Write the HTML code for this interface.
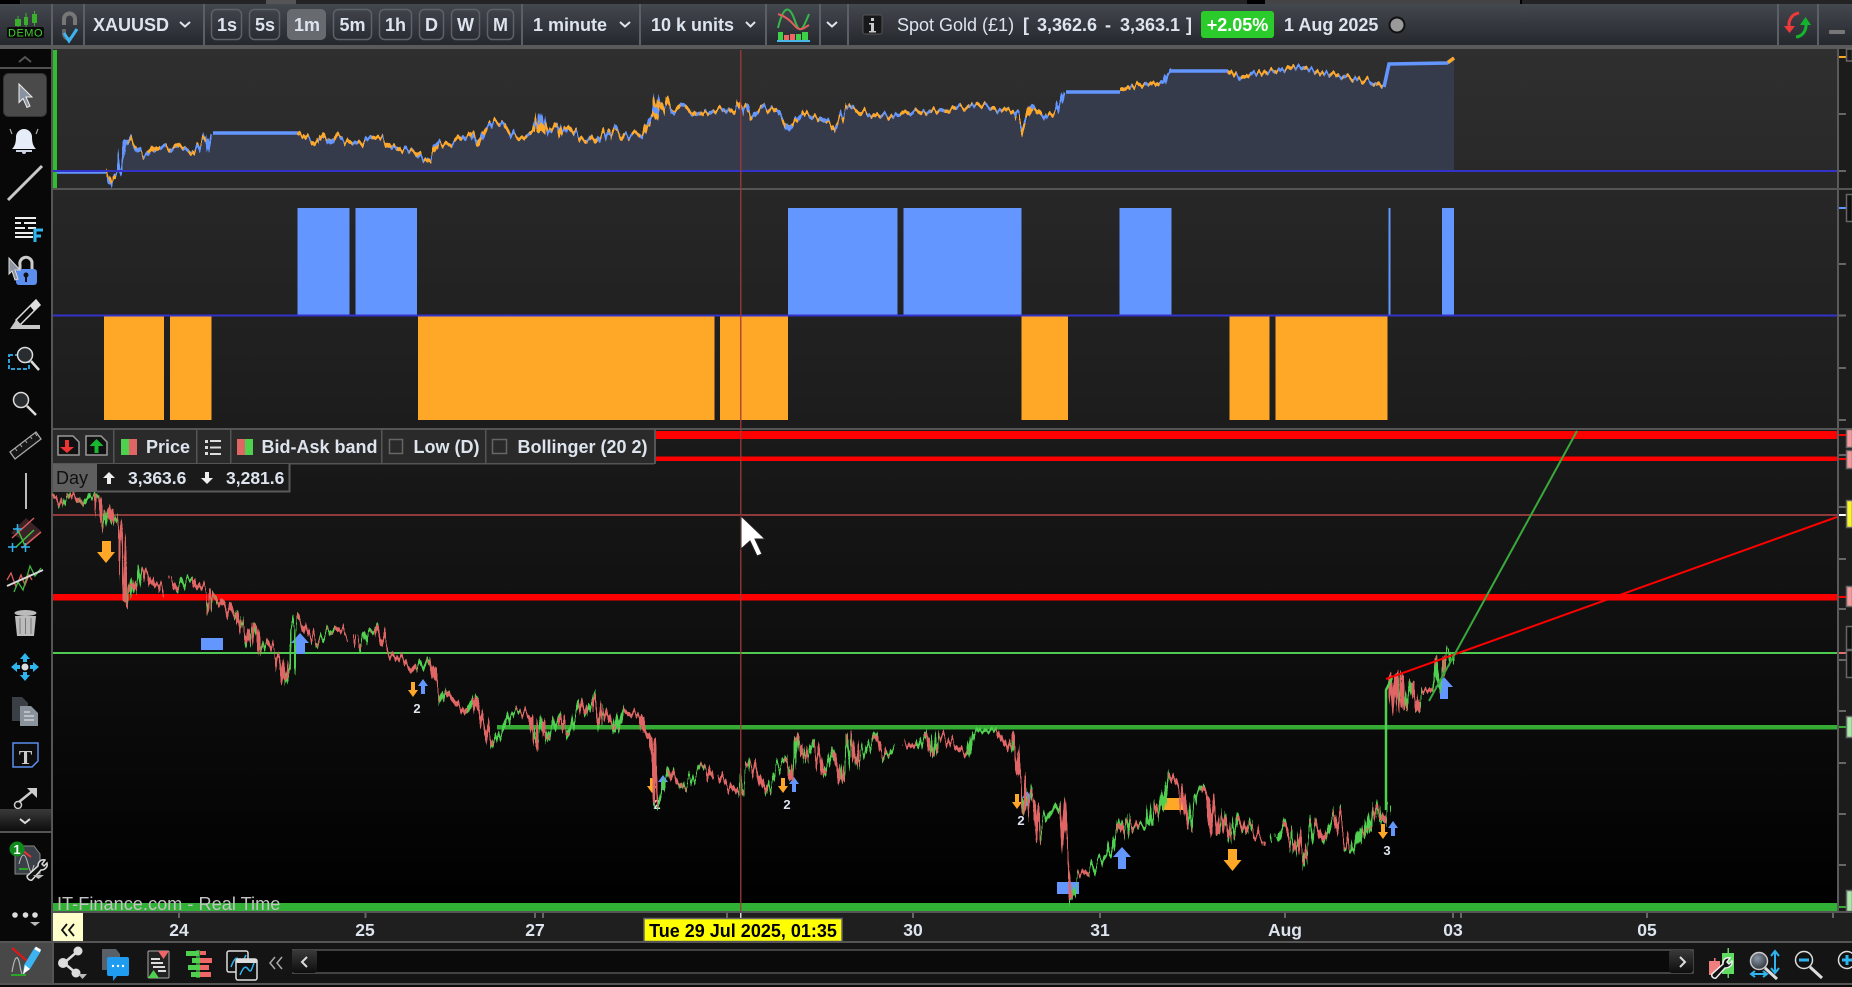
<!DOCTYPE html>
<html lang="en"><head><meta charset="utf-8"><title>XAUUSD chart</title>
<style>
html,body{margin:0;padding:0;background:#000;width:1852px;height:987px;overflow:hidden}
svg{display:block}
text{font-family:"Liberation Sans",sans-serif;font-weight:700;font-size:18px;fill:#dde4ee}
.r{font-weight:400}
</style></head><body>
<svg width="1852" height="987" viewBox="0 0 1852 987" xmlns="http://www.w3.org/2000/svg">
<defs>
<linearGradient id="tb" x1="0" y1="0" x2="0" y2="1"><stop offset="0" stop-color="#44484f"/><stop offset="1" stop-color="#25282d"/></linearGradient>
<linearGradient id="p1" x1="0" y1="0" x2="0" y2="1"><stop offset="0" stop-color="#2f2f2f"/><stop offset="1" stop-color="#282828"/></linearGradient>
<linearGradient id="p2" x1="0" y1="0" x2="0" y2="1"><stop offset="0" stop-color="#272727"/><stop offset="1" stop-color="#1c1c1c"/></linearGradient>
<linearGradient id="p3" x1="0" y1="0" x2="0" y2="1"><stop offset="0" stop-color="#1a1a1a"/><stop offset="1" stop-color="#000"/></linearGradient>
<linearGradient id="bar" x1="0" y1="0" x2="0" y2="1"><stop offset="0" stop-color="#3a3a3a"/><stop offset="1" stop-color="#0d0d0d"/></linearGradient>
<radialGradient id="gl" cx=".4" cy=".35" r=".7"><stop offset="0" stop-color="#8b98a8"/><stop offset="1" stop-color="#2c3138"/></radialGradient>
<filter id="jag" filterUnits="userSpaceOnUse" x="0" y="470" width="1852" height="460" color-interpolation-filters="sRGB">
<feTurbulence type="fractalNoise" baseFrequency="0.33 0.004" numOctaves="1" seed="7" result="n"/>
<feDisplacementMap in="SourceGraphic" in2="n" scale="22" xChannelSelector="B" yChannelSelector="R"/>
</filter>
<filter id="jag2" filterUnits="userSpaceOnUse" x="0" y="50" width="1852" height="140" color-interpolation-filters="sRGB">
<feTurbulence type="fractalNoise" baseFrequency="0.3 0.004" numOctaves="1" seed="4" result="n"/>
<feDisplacementMap in="SourceGraphic" in2="n" scale="14" xChannelSelector="B" yChannelSelector="R"/>
</filter>
</defs>
<rect width="1852" height="987" fill="#000"/>
<!-- top strip -->
<rect x="0" y="0" width="1852" height="5" fill="#242424"/>
<rect x="0" y="0" width="20" height="4" fill="#000"/>
<rect x="266" y="0" width="30" height="4" fill="#555"/>
<rect x="1247" y="0" width="18" height="4" fill="#000"/>
<rect x="1265" y="0" width="255" height="4" fill="#444"/>
<rect x="1520" y="0" width="2" height="4" fill="#000"/>
<!-- toolbar -->
<rect x="0" y="4" width="1852" height="41" fill="url(#tb)"/>
<rect x="0" y="45" width="1852" height="4" fill="#5a5a5a"/>
<g fill="#5c6066"><rect x="51" y="4" width="2" height="41"/><rect x="83" y="4" width="2" height="41"/><rect x="203" y="4" width="2" height="41"/><rect x="521" y="4" width="2" height="41"/><rect x="639" y="4" width="2" height="41"/><rect x="765" y="4" width="2" height="41"/><rect x="819" y="4" width="2" height="41"/><rect x="847" y="4" width="2" height="41"/><rect x="1777" y="4" width="2" height="41"/><rect x="1817" y="4" width="2" height="41"/></g>
<!-- demo logo -->
<rect x="7" y="27" width="37" height="11" rx="2" fill="#0a0a0a"/>
<text x="25.500" y="36.500" text-anchor="middle" style="font-size:11px;font-weight:400;fill:#43d02f;letter-spacing:.5px">DEMO</text>
<g fill="#3cae2e"><rect x="15" y="19" width="6" height="7"/><rect x="24" y="17" width="4" height="8"/><rect x="32" y="14" width="5" height="9"/><rect x="17.500" y="16" width="1" height="11"/><rect x="25.500" y="13" width="1" height="14"/><rect x="34" y="11" width="1" height="15"/></g>
<!-- connection -->
<path d="M64 25V19a5.500 5.500 0 0 1 11 0v6" fill="none" stroke="#777" stroke-width="4"/>
<path d="M64 29v5a5.500 5.500 0 0 0 6 5" fill="none" stroke="#666" stroke-width="4"/>
<path d="M64 33l5 8 8-12" fill="none" stroke="#3cb4f0" stroke-width="3"/>
<text x="93" y="31">XAUUSD</text>
<path d="M180 22l5 4.500 5-4.500" fill="none" stroke="#dde4ee" stroke-width="2"/>
<!-- timeframe buttons -->
<g fill="none" stroke="#5d6268" stroke-width="1.500">
<rect x="211.500" y="9.500" width="30" height="30" rx="5"/><rect x="249.500" y="9.500" width="30" height="30" rx="5"/><rect x="333.500" y="9.500" width="38" height="30" rx="5"/><rect x="379.500" y="9.500" width="32" height="30" rx="5"/><rect x="419.500" y="9.500" width="24" height="30" rx="5"/><rect x="451.500" y="9.500" width="28" height="30" rx="5"/><rect x="487.500" y="9.500" width="26" height="30" rx="5"/></g>
<rect x="287" y="9" width="39" height="31" rx="5" fill="#676a6e"/>
<g text-anchor="middle"><text x="227" y="31">1s</text><text x="265" y="31">5s</text><text x="307" y="31">1m</text><text x="352.500" y="31">5m</text><text x="395.500" y="31">1h</text><text x="431.500" y="31">D</text><text x="465.500" y="31">W</text><text x="500.500" y="31">M</text></g>
<text x="533" y="31">1 minute</text>
<path d="M620 22l5 4.500 5-4.500" fill="none" stroke="#dde4ee" stroke-width="2"/>
<text x="651" y="31">10 k units</text>
<path d="M746 22l4.500 4.500 4.500-4.500" fill="none" stroke="#dde4ee" stroke-width="2"/>
<!-- indicator icon -->
<path d="M778 28c6-25 12-22 17-7s8 8 14-7" fill="none" stroke="#35b84a" stroke-width="2"/>
<path d="M778 14c7 2 12 6 17 12s9 2 14-1" fill="none" stroke="#e25c5c" stroke-width="2"/>
<g><rect x="778" y="32" width="5" height="8" fill="#3fd04a"/><rect x="784" y="35" width="5" height="5" fill="#e66"/><rect x="790" y="34" width="5" height="6" fill="#e66"/><rect x="796" y="34" width="5" height="6" fill="#3fd04a"/><rect x="802" y="32" width="6" height="8" fill="#3fd04a"/><rect x="777" y="40" width="33" height="2" fill="#49b8e8"/></g>
<path d="M827 22l5 4.500 5-4.500" fill="none" stroke="#dde4ee" stroke-width="2"/>
<!-- info -->
<rect x="863" y="15" width="19" height="19" rx="2" fill="#17181a" stroke="#555"/>
<rect x="871" y="18" width="3" height="3" fill="#ccc"/><path d="M869 23h5v8h2v1.500h-7V31h2v-6.500h-2z" fill="#ccc"/>
<text x="897" y="31" class="r">Spot Gold (£1)</text>
<text x="1023" y="31">[</text><text x="1037" y="31">3,362.6</text><text x="1105" y="31">-</text><text x="1120" y="31">3,363.1</text><text x="1186" y="31">]</text>
<rect x="1201" y="11" width="73" height="27" rx="3" fill="#2ccb2c"/>
<text x="1237.500" y="31" text-anchor="middle" style="fill:#fff">+2.05%</text>
<text x="1284" y="31">1 Aug 2025</text>
<circle cx="1397" cy="25" r="7.500" fill="#9a9a9a" stroke="#111" stroke-width="2"/>
<!-- refresh icon -->
<path d="M1799 13c-8 1-12 9-9 17" fill="none" stroke="#ee3a3a" stroke-width="3"/><path d="M1784 26h11l-5.500 7z" fill="#ee3a3a"/>
<path d="M1796 37c8-1 12-9 9-17" fill="none" stroke="#12b52c" stroke-width="3"/><path d="M1811 25h-11l5.500-8z" fill="#12b52c"/>
<rect x="1829" y="30" width="16" height="4" rx="1" fill="#777"/>

<!-- left sidebar -->
<rect x="0" y="49" width="51" height="938" fill="#080808"/>
<rect x="51" y="49" width="2" height="894" fill="#555"/>
<path d="M19 62l6-5 6 5" fill="none" stroke="#555" stroke-width="2"/>
<rect x="0" y="67" width="51" height="2" fill="#505050"/>
<rect x="3.500" y="73.500" width="43" height="43" rx="5" fill="#4a4a4a" stroke="#333"/>
<path d="M19 84l13 13h-6l4 9-3 1.500-4-9-4 4z" fill="#89929f" stroke="#eee" stroke-width="1"/>
<!-- bell -->
<path d="M24 129a8 8 0 0 1 8 8c0 7 2 10 4 12H12c2-2 4-5 4-12a8 8 0 0 1 8-8z" fill="#e6edf8"/>
<rect x="16" y="150" width="16" height="2" fill="#cfd7e4"/><circle cx="24" cy="152" r="2" fill="#cfd7e4"/>
<path d="M10 129l2 5M38 129l-2 5" stroke="#aaa" stroke-width="1.200"/>
<!-- line -->
<path d="M8 200L42 166" stroke="#c9c9c9" stroke-width="3"/>
<!-- data F -->
<g fill="#eee"><rect x="15" y="217" width="21" height="2"/><rect x="15" y="222" width="6" height="2"/><rect x="24" y="222" width="12" height="2"/><rect x="15" y="227" width="10" height="2"/><rect x="28" y="227" width="8" height="2"/><rect x="15" y="232" width="18" height="2"/><rect x="15" y="236" width="18" height="2"/></g>
<path d="M35 242v-12h8M35 236h6" fill="none" stroke="#2fb4ee" stroke-width="3"/>
<!-- lock -->
<path d="M20 274v-9a6 6 0 0 1 12-3v8" fill="none" stroke="#ccc" stroke-width="3"/>
<rect x="16" y="269" width="21" height="16" rx="3" fill="#5c8ef0"/><circle cx="26" cy="275" r="2.500" fill="#111"/><rect x="25" y="276" width="2" height="6" fill="#111"/>
<path d="M9 258l11 12h-5l3 9-3 1-3-9-3 3z" fill="#8b94a0" stroke="#ddd"/>
<!-- eraser -->
<path d="M16 320l20-20 4 5-20 20z" fill="none" stroke="#ddd" stroke-width="1.500"/><path d="M30 306l6-6 4 5-6 6z" fill="#ddd"/>
<path d="M10 329l6-9 6 5h18v4z" fill="#c8c8c8"/>
<!-- zoom box -->
<rect x="9" y="355" width="20" height="14" fill="none" stroke="#2fb4ee" stroke-width="1.800" stroke-dasharray="4 2"/>
<circle cx="25" cy="355" r="7.500" fill="#2a2d30" stroke="#ddd" stroke-width="1.500"/>
<path d="M31 361l8 9" stroke="#ddd" stroke-width="2.500"/>
<!-- magnifier -->
<circle cx="21" cy="400" r="7.500" fill="#2a2d30" stroke="#ddd" stroke-width="1.500"/>
<path d="M27 406l9 9" stroke="#ddd" stroke-width="2.500"/>
<!-- ruler -->
<path d="M10 452l26-20 5 7-26 20z" fill="#161616" stroke="#aaa" stroke-width="1.300"/>
<path d="M15 448l2 3M20 444l2 3M25 440l2 3M30 436l2 3M35 433l2 3" stroke="#aaa"/>
<rect x="25" y="473" width="2" height="36" fill="#bbb"/>
<!-- fib -->
<path d="M26 518l15 13-13 13-17-11z" fill="#3a2327"/>
<path d="M12 538L34 518M22 548L41 532" stroke="#d95c5c" stroke-width="1.500"/>
<path d="M17 528l9 20M16 547l18-17" stroke="#3fc23f" stroke-width="1.500"/>
<g stroke="#2fb4ee" stroke-width="1.500"><path d="M13 529h9M17.500 524v9M8 547h9M12.500 543v9M21 547h9M25.500 543v9"/></g>
<!-- waves -->
<path d="M7 580l4-7 5 14 5-12 4 10 4-10 3 5" fill="none" stroke="#d95c5c" stroke-width="1.300"/>
<path d="M14 592l4-10 5 8 7-24 5 10 6-8" fill="none" stroke="#3fb73f" stroke-width="1.300"/>
<path d="M7 586L43 570" stroke="#d8d8d8" stroke-width="2"/>
<!-- trash -->
<ellipse cx="25.500" cy="613" rx="11" ry="3" fill="#bbb"/><path d="M15 616h21l-2 20H17z" fill="#bcbcbc"/><path d="M20 618v16M25.500 618v16M31 618v16" stroke="#777"/>
<!-- move -->
<circle cx="25" cy="667" r="3.500" fill="#ddd"/>
<g fill="#2fb4ee"><path d="M25 653l5 6h-3v3h-4v-3h-3z"/><path d="M25 681l5-6h-3v-3h-4v3h-3z"/><path d="M11 667l6-5v3h3v4h-3v3z"/><path d="M39 667l-6-5v3h-3v4h3v3z"/></g>
<!-- docs -->
<path d="M12 697h10l6 6v18H12z" fill="#3a3f46"/><path d="M20 706h11l7 7v13H20z" fill="#8a939b"/><path d="M24 716h10M24 720h10M24 712h6" stroke="#eee"/>
<!-- T -->
<path d="M13 743h25v18l-6 6H13z" fill="#0d0d0d" stroke="#5c8ef0" stroke-width="1.500"/>
<text x="25.500" y="764" text-anchor="middle" style="font-family:'Liberation Serif',serif;font-size:20px;fill:#ccc">T</text>
<!-- arrow -->
<path d="M19 802L35 789" stroke="#ccc" stroke-width="2.500"/><path d="M27 788h10v10z" fill="#ccc"/><circle cx="18" cy="805" r="3.500" fill="none" stroke="#ccc" stroke-width="1.500"/>
<rect x="0" y="809" width="51" height="22" fill="url(#bar)"/>
<path d="M20 819l5 4 5-4" fill="none" stroke="#ddd" stroke-width="2"/>
<rect x="0" y="831" width="51" height="2" fill="#555"/>
<!-- doc wrench icon -->
<path d="M15 846h19l6 8v20H15z" fill="#3b4048" stroke="#888"/><path d="M19 864c3-12 6-12 9 0s4 8 6 1" fill="none" stroke="#bbb"/><path d="M23 851l8 6" stroke="#e33" stroke-width="2"/><rect x="19" y="868" width="9" height="2" fill="#2aa52a"/>
<path d="M27 876l11-10c0-5 4-7 7-6l-3 4 2 2 3-3c1 4-2 7-6 7l-9 10c-3 1-5-2-5-4z" fill="#111" stroke="#ddd" stroke-width="1.500"/>
<path d="M33 875h11l-5.500 4z" fill="#bbb"/>
<circle cx="17" cy="849" r="7.500" fill="#0f8a1c"/><text x="17" y="854" text-anchor="middle" style="font-size:13px;fill:#fff">1</text>
<!-- dots -->
<circle cx="15" cy="915" r="2.800" fill="#ddd"/><circle cx="25.500" cy="915" r="2.800" fill="#ddd"/><circle cx="35" cy="915" r="2.800" fill="#ddd"/>
<path d="M30 922h10l-5 4z" fill="#bbb"/>

<!-- panel 1 -->
<rect x="53" y="49" width="1786" height="139" fill="url(#p1)"/>
<rect x="53" y="50" width="4" height="138" fill="#2fbe2f"/>
<rect x="53" y="188" width="1786" height="2" fill="#555"/>
<path d="M121 171L125 145 129.500 140 135 148 144 156 150 154 155 148 165 145 173 150 179.500 145 186 148 194 153 199.500 145 206 138 208.500 147 213 133 298 133 307 138 318 145 323 138 329 144 336 136 347 142 360 144 367 138 380 137 391.500 147 398 152 405 149 416 153 420.500 159 429.500 160 438.400 143 449.600 146 463 137 472 133 478.600 145 485 131 494 121 503 123 514 136 523 137 534 132 536.600 120 541 133 543 120 548 132 557 124 561 135 568 127 581 140 590 137 597 143 606 132 610 138 617 129 624 137 637 132 644 135 650 121 655 118 658 98 664 110 668 102 673 112 682 105 688 107 695 112 704 115 713 111 728 108 735 112 740 103 746 108 749 117 762 106 780 115 789 128 803 112 821 118 833 128 848 106 868 115 898 115 933 110 980 106 1016 112 1023 130 1033 106 1045 116 1057 112 1066 92 1120 91 1140 85 1163 83 1169 71 1228 71 1240 77 1270 71 1299 67 1323 73 1346 77 1376 83 1384 87 1389 64 1447 63 1454 58V171z" fill="#363b4c"/>
<!-- equity flat stretches -->
<path d="M57 172H106M213 133H298M1066 92H1120M1169 71H1228M1384 87L1389 64 1447 63 1454 58" fill="none" stroke="#6496ff" stroke-width="3.500"/>
<path d="M1448 62.500L1454 58" fill="none" stroke="#ffa726" stroke-width="3.500"/>
<!-- equity choppy stretches -->
<g filter="url(#jag2)" fill="none" stroke-width="3.500">
<g stroke="#6496ff">
<path d="M106 172L111 183 115 177 121 172 125 145 129.500 140 135 148 144 156 150 154 155 148 165 145 173 150 179.500 145 186 148 194 153 199.500 145 206 138 208.500 147 213 133"/>
<path id="eqc" d="M298 133L307 138 318 145 323 138 329 144 336 136 347 142 360 144 367 138 380 137 391.500 147 398 152 405 149 416 153 420.500 159 429.500 160 438.400 143 449.600 146 463 137 472 133 478.600 145 485 131 494 121 503 123 514 136 523 137 534 132 536.600 120 541 133 543 120 548 132 557 124 561 135 568 127 581 140 590 137 597 143 606 132 610 138 617 129 624 137 637 132 644 135 650 121 655 118 658 98 664 110 668 102 673 112 682 105 688 107 695 112 704 115 713 111 728 108 735 112 740 103 746 108 749 117 762 106 780 115 789 128 803 112 821 118 833 128 848 106 868 115 898 115 933 110 980 106 1016 112 1023 130 1033 106 1045 116 1057 112 1066 92"/>
<path d="M1120 91L1140 85 1163 83 1169 71"/>
<path d="M1228 71L1240 77 1270 71 1299 67 1323 73 1346 77 1376 83 1384 87"/>
</g>
<g stroke="#ffa726" stroke-dasharray="9 6">
<path d="M106 172L111 183 115 177"/>
<path d="M129.500 140L135 148 144 156 150 154 155 148 165 145 173 150 179.500 145 186 148 194 153 199.500 145 206 138"/>
<path d="M298 133L307 138 318 145 323 138 329 144 336 136 347 142 360 144 367 138 380 137 391.500 147 398 152 405 149 416 153 420.500 159 429.500 160 438.400 143 449.600 146 463 137 472 133 478.600 145 485 131 494 121 503 123 514 136 523 137 534 132 536.600 120 541 133 543 120 548 132 557 124 561 135 568 127 581 140 590 137 597 143 606 132 610 138 617 129 624 137 637 132 644 135 650 121 655 118 658 98 664 110 668 102 673 112 682 105 688 107 695 112 704 115 713 111 728 108 735 112 740 103 746 108 749 117 762 106 780 115 789 128 803 112 821 118 833 128 848 106 868 115 898 115 933 110 980 106 1016 112 1023 130 1033 106 1045 116 1057 112"/>
<path d="M1120 91L1140 85 1163 83"/>
<path d="M1228 71L1240 77 1270 71 1299 67 1323 73 1346 77 1376 83 1384 87"/>
</g></g>
<rect x="53" y="170" width="1786" height="2" fill="#3333cc"/>
<!-- panel 2 -->
<rect x="53" y="190" width="1786" height="238" fill="url(#p2)"/>
<g fill="#6496ff"><rect x="297.500" y="208" width="52" height="107"/><rect x="355.500" y="208" width="61.500" height="107"/><rect x="788" y="208" width="109.500" height="107"/><rect x="903.500" y="208" width="118" height="107"/><rect x="1119.500" y="208" width="52" height="107"/><rect x="1388.500" y="208" width="2" height="107"/><rect x="1442" y="208" width="12" height="107"/></g>
<g fill="#ffa726"><rect x="104" y="316" width="60" height="104"/><rect x="170" y="316" width="41.500" height="104"/><rect x="418" y="316" width="296.500" height="104"/><rect x="720" y="316" width="68" height="104"/><rect x="1021.500" y="316" width="46.500" height="104"/><rect x="1229.500" y="316" width="40" height="104"/><rect x="1275.500" y="316" width="112" height="104"/></g>
<rect x="53" y="314.500" width="1786" height="2" fill="#3333cc"/>
<rect x="53" y="428" width="1786" height="2" fill="#555"/>
<!-- main panel -->
<rect x="53" y="430" width="1784" height="481" fill="url(#p3)"/>
<rect x="53" y="431" width="1784" height="8" fill="#f00"/>
<rect x="53" y="456.500" width="1784" height="4.500" fill="#f00"/>
<rect x="53" y="514" width="1784" height="2" fill="#8f3a3a"/>
<rect x="53" y="594" width="1784" height="6.500" fill="#f00"/>
<rect x="53" y="652" width="1784" height="2" fill="#4fc94f"/>
<rect x="497" y="725" width="1340" height="4.500" fill="#35ab35"/>
<rect x="53" y="903" width="1784" height="8" fill="#30b035"/>
<!-- markers -->
<g fill="#ffa726">
<path d="M102 541h9v11h4l-9 11-9-11h5z"/><path d="M1228 849h9v11h4.500l-9 11-9-11h4.500z"/>
<path d="M411 682h4v8h3l-5 7-5-7h3z"/><path d="M650 778h4v8h3l-5 7-5-7h3z"/><path d="M781 778h4v8h3l-5 7-5-7h3z"/><path d="M1015 794h4v8h3l-5 7-5-7h3z"/><path d="M1381 824h4v8h3l-5 7-5-7h3z"/>
<rect x="1162" y="798" width="21" height="12"/></g>
<g fill="#6496ff">
<rect x="201" y="638" width="22" height="12"/><rect x="1057" y="882" width="22" height="12"/>
<path d="M300 633l9 10h-4v11h-9v-11h-5z"/><path d="M1122 847l9 10h-5v12h-8v-12h-5z"/><path d="M1444 677l9 10h-5v12h-8v-12h-5z"/>
<path d="M423 679l5 7h-3v8h-4v-8h-3z"/><path d="M663 775l5 7h-3v8h-4v-8h-3z"/><path d="M794 777l5 7h-3v8h-4v-8h-3z"/><path d="M1027 791l5 7h-3v8h-4v-8h-3z"/><path d="M1393 821l5 7h-3v8h-4v-8h-3z"/></g>
<g text-anchor="middle"><text x="417" y="713" style="font-size:13px">2</text><text x="657" y="809" style="font-size:13px">2</text><text x="787" y="809" style="font-size:13px">2</text><text x="1021" y="825" style="font-size:13px">2</text><text x="1387" y="855" style="font-size:13px">3</text></g>
<!-- candles -->
<g filter="url(#jag)">
<g fill="none" stroke="#4fd04f" stroke-width="3.500">
<path d="M53 495L62 505 70 495 83 503 90 495 97 495 100 507 103 533 109 508 112 523 117 517 121 530 123 553 125 593 127 605 130 582 135 592 141 568 147 570 153 585 160 587 162 593"/>
<path d="M170 578L177 588 185 577 193 577 198 587 207 593 210 613 215 595 225 605 235 623 240 617 248 643 254 623 260 653 268 643 280 657 285 682 290 670 292 632 298 618 313 637 317 642 323 637 332 627 340 630 347 640"/>
<path d="M355 635L360 645 365 633 377 627 383 642 390 652 403 660 417 672 427 660 435 683 440 700 445 690 457 703 467 713 475 697 483 723 491.500 747 501 733 511 713 519 712 531 717 535 747 543 718 547 740 559 715 567 735 580.500 702 586 713 594 698 600 722 604 708 616 730 622 710 640 717 644 730 652 740 656 803 660 798 669 770 677 783 683 788 701 767 707 768 711 778"/>
<path d="M719 775L727 783 739 795 747 763 754 765 766 790 778 767 786 758 792 780 797 737 806 760 814 742 824 775 833.500 752 842 782 850.500 730 857 765 875 735 885 757 895 747"/>
<path d="M903 743L917 747 926 732 933 757 938 732 956 747 968 755 974 732 996 730 1011.500 750 1013.500 735 1017 763 1023 783 1025 812 1029 793 1035 807 1039 842 1047 820 1061 802 1065 843 1069 887 1070 897 1080 875 1088 878 1100 860 1107 857 1118 825 1123 837 1128 818 1137 828 1148 825 1153 802 1160 817 1169 775 1175 782 1180 788 1188 828 1195 795 1203 787 1210 797 1217 837 1223 817 1230 842 1237 818 1245 832 1250 823 1257 838 1267 840"/>
<path d="M1275 840L1282 825 1292 848 1297 830 1305 860 1315 822 1323 838 1335 813 1348 850 1353 850 1360 825 1368 832 1373 805 1382 823 1387 803"/>
<path d="M1393 675L1397 715 1401 673 1404 708 1410 683 1417 711 1422 690 1433 693 1437 682 1441 657 1443 677 1450 652"/></g>
<path fill="none" stroke="#e06666" stroke-width="4" d="M53 495L62 505M70 495L83 503M97 495L100 507 103 533M109 508L112 523M117 517L121 530 123 553 125 593 127 605M130 582L135 592M141 568L147 570 153 585 160 587 162 593M170 578L177 588M193 577L198 587 207 593 210 613M215 595L225 605 235 623M240 617L248 643M254 623L260 653M268 643L280 657 285 682M298 618L313 637 317 642M332 627L340 630 347 640M355 635L360 645M377 627L383 642 390 652 403 660 417 672M427 660L435 683 440 700M445 690L457 703 467 713M475 697L483 723 491.500 747M519 712L531 717 535 747M543 718L547 740M559 715L567 735M580.500 702L586 713M594 698L600 722M604 708L616 730M622 710L640 717 644 730 652 740 656 803M669 770L677 783 683 788M701 767L707 768 711 778M719 775L727 783 739 795M747 763L754 765 766 790M786 758L792 780M797 737L806 760M814 742L824 775M833.500 752L842 782M850.500 730L857 765M875 735L885 757M903 743L917 747M926 732L933 757M938 732L956 747 968 755M996 730L1011.500 750M1013.500 735L1017 763 1023 783 1025 812M1029 793L1035 807 1039 842M1061 802L1065 843 1069 887 1070 897M1080 875L1088 878M1118 825L1123 837M1128 818L1137 828M1153 802L1160 817M1169 775L1175 782 1180 788 1188 828M1203 787L1210 797 1217 837M1223 817L1230 842M1237 818L1245 832M1250 823L1257 838 1267 840M1282 825L1292 848M1297 830L1305 860M1315 822L1323 838M1335 813L1348 850M1360 825L1368 832M1373 805L1382 823M1393 675L1397 715M1401 673L1404 708M1410 683L1417 711M1422 690L1433 693M1441 657L1443 677"/>
</g>
<!-- big green jump candle -->
<path d="M1386 810V690L1392 678" fill="none" stroke="#4fd04f" stroke-width="2.500"/>
<!-- crosshair above candles -->
<rect x="740" y="50" width="1.500" height="862" fill="#a03a3a" opacity=".85"/>
<!-- trend lines -->
<path d="M1386 679L1837 517" stroke="#f00" stroke-width="2"/>
<path d="M1429 701L1577 431" stroke="#3aa83a" stroke-width="2"/>
<!-- mouse cursor -->
<path d="M741 516l24 23h-10l7 15-5 2-7-15-9 8z" fill="#fff" stroke="#222"/>
<!-- legend -->
<rect x="53" y="430" width="601" height="33" fill="#2a2a2a"/>
<rect x="654" y="430" width="2" height="34" fill="#555"/>
<rect x="53" y="463" width="601" height="1.500" fill="#555"/>
<g fill="#555"><rect x="113" y="430" width="1.500" height="33"/><rect x="196" y="430" width="1.500" height="33"/><rect x="230" y="430" width="1.500" height="33"/><rect x="381" y="430" width="1.500" height="33"/><rect x="485" y="430" width="1.500" height="33"/></g>
<path d="M58 436h15l6 6v13H58z" fill="#111" stroke="#999" stroke-width="1.500"/><path d="M65 440h4v7h5l-7 6-7-6h5z" fill="#ee3333"/>
<path d="M86 436h15l6 6v13H86z" fill="#111" stroke="#999" stroke-width="1.500"/><path d="M96.500 439l7 7h-5v7h-4v-7h-5z" fill="#18b830"/>
<rect x="121" y="439" width="8" height="16" fill="#4fd04f"/><rect x="129" y="439" width="8" height="16" fill="#e06666"/>
<text x="146" y="453">Price</text>
<g fill="#ddd"><rect x="205" y="440" width="3" height="3"/><rect x="210" y="440" width="11" height="2"/><rect x="205" y="446" width="3" height="3"/><rect x="210" y="446.500" width="11" height="2"/><rect x="205" y="452" width="3" height="3"/><rect x="210" y="453" width="11" height="2"/></g>
<rect x="237" y="439" width="8" height="16" fill="#e06666"/><rect x="245" y="439" width="8" height="16" fill="#4fd04f"/>
<text x="261.500" y="453">Bid-Ask band</text>
<rect x="389.500" y="439.500" width="13" height="14" fill="none" stroke="#666" stroke-width="1.500"/>
<text x="413.500" y="453">Low (D)</text>
<rect x="492.500" y="439.500" width="14" height="14" fill="none" stroke="#666" stroke-width="1.500"/>
<text x="517.500" y="453">Bollinger (20 2)</text>
<rect x="53" y="464" width="44" height="28" fill="#5f5f5f"/>
<text x="56" y="484" class="r" style="fill:#111;font-size:18px">Day</text>
<rect x="97" y="464" width="193" height="28" fill="#1a1a1a"/>
<path d="M97 491.500H289.500V464" fill="none" stroke="#5a5a5a" stroke-width="2"/>
<path d="M109 472l6 6h-4v6h-4v-6h-4z" fill="#eee"/>
<path d="M207 484l6-6h-4v-6h-4v6h-4z" fill="#eee"/>
<text x="128" y="484" style="font-size:17.500px">3,363.6</text>
<text x="226" y="484" style="font-size:17.500px">3,281.6</text>
<!-- IT finance -->
<text x="57" y="910" class="r" style="fill:#c4c4c4;font-size:18.200px">IT-Finance.com - Real Time</text>
<!-- right scale -->
<rect x="1839" y="49" width="13" height="864" fill="#1c1c1c"/>
<rect x="1837" y="49" width="2" height="864" fill="#5a5a5a"/>
<rect x="1837" y="188" width="15" height="2" fill="#555"/><rect x="1837" y="428" width="15" height="2" fill="#555"/>
<g fill="#666"><rect x="1839" y="113" width="7" height="2"/><rect x="1839" y="170" width="7" height="2"/><rect x="1839" y="263" width="7" height="2"/><rect x="1839" y="314.500" width="7" height="2"/><rect x="1839" y="367" width="7" height="2"/><rect x="1839" y="419" width="7" height="2"/><rect x="1839" y="454" width="7" height="2"/><rect x="1839" y="506" width="7" height="2"/><rect x="1839" y="558" width="7" height="2"/><rect x="1839" y="608" width="7" height="2"/><rect x="1839" y="659" width="7" height="2"/><rect x="1839" y="710" width="7" height="2"/><rect x="1839" y="762" width="7" height="2"/><rect x="1839" y="813" width="7" height="2"/><rect x="1839" y="864" width="7" height="2"/></g>
<rect x="1839" y="56" width="7" height="2" fill="#ffa726"/><rect x="1839" y="207" width="7" height="2" fill="#6496ff"/>
<rect x="1839" y="434" width="7" height="2" fill="#f00"/><rect x="1839" y="458" width="7" height="2" fill="#f00"/><rect x="1839" y="514" width="7" height="2" fill="#fff"/><rect x="1839" y="596" width="7" height="2" fill="#f00"/><rect x="1839" y="652" width="7" height="2" fill="#e07070"/><rect x="1839" y="726" width="7" height="2" fill="#35ab35"/><rect x="1839" y="906" width="7" height="2" fill="#35ab35"/>
<g stroke="#666" stroke-width="1.500">
<rect x="1846.500" y="49" width="6" height="12" fill="#1a1a1a"/><rect x="1846.500" y="194.500" width="6" height="27" fill="#111"/>
<rect x="1846.500" y="429.500" width="6" height="18" fill="#f59a9a"/><rect x="1846.500" y="450.500" width="6" height="18" fill="#f59a9a"/>
<rect x="1846.500" y="500.500" width="6" height="27" fill="#f6f628"/>
<rect x="1846.500" y="586.500" width="6" height="20" fill="#f59a9a"/>
<rect x="1846.500" y="626.500" width="6" height="23" fill="#111"/><rect x="1846.500" y="650.500" width="6" height="27" fill="#111"/>
<rect x="1846.500" y="716.500" width="6" height="21" fill="#a8e8a8"/><rect x="1846.500" y="890.500" width="6" height="21" fill="#a8e8a8"/></g>
<!-- time axis -->
<rect x="53" y="911" width="1799" height="2" fill="#555"/>
<rect x="53" y="913" width="1799" height="28" fill="#1f1f1f"/>
<rect x="53" y="913" width="30" height="28" fill="#ffffcc"/>
<path d="M67 924l-5 6 5 6M74 924l-5 6 5 6" fill="none" stroke="#111" stroke-width="1.800"/>
<g fill="#666"><rect x="178" y="913" width="2" height="5"/><rect x="364.500" y="913" width="2" height="5"/><rect x="534" y="913" width="2" height="5"/><rect x="542" y="913" width="2" height="5"/><rect x="726" y="913" width="2" height="5"/><rect x="1452" y="913" width="2" height="5"/><rect x="1460" y="913" width="2" height="5"/><rect x="1646" y="913" width="2" height="5"/><rect x="1832" y="913" width="2" height="5"/><rect x="912" y="913" width="2" height="5"/><rect x="1099" y="913" width="2" height="5"/><rect x="1284" y="913" width="2" height="5"/></g>
<rect x="740" y="913" width="1.500" height="5" fill="#ddd"/>
<g text-anchor="middle"><text x="179" y="936" style="font-size:17.500px">24</text><text x="365" y="936" style="font-size:17.500px">25</text><text x="535" y="936" style="font-size:17.500px">27</text><text x="913" y="936" style="font-size:17.500px">30</text><text x="1100" y="936" style="font-size:17.500px">31</text><text x="1285" y="936" style="font-size:17.500px">Aug</text><text x="1453" y="936" style="font-size:17.500px">03</text><text x="1647" y="936" style="font-size:17.500px">05</text></g>
<rect x="644" y="918.500" width="198" height="23" fill="#ff0" stroke="#666" stroke-width="1.500"/>
<text x="743" y="937" text-anchor="middle" style="fill:#000">Tue 29 Jul 2025, 01:35</text>
<!-- bottom toolbar -->
<rect x="0" y="941" width="1852" height="2" fill="#555"/>
<rect x="53" y="943" width="1799" height="40" fill="#141414"/>
<rect x="0" y="943" width="52" height="40" fill="#484848"/>
<rect x="52" y="943" width="2" height="40" fill="#555"/>
<rect x="0" y="983" width="1852" height="2" fill="#555"/>
<rect x="0" y="985" width="1852" height="2" fill="#0a0a0a"/>
<!-- pen -->
<path d="M12 972c3-18 6-18 8-6s4 12 7-4" fill="none" stroke="#b5b5b5" stroke-width="1.200"/>
<path d="M12 948l15 13" stroke="#e11" stroke-width="2"/><rect x="11" y="974" width="15" height="2" fill="#2aa52a"/>
<path d="M35 947l6 4-11 18-7 5 1-9z" fill="#3cb4f0"/><path d="M25 965l5 4-7 5z" fill="#fff"/><rect x="35" y="948" width="6" height="3" transform="rotate(30 38 949)" fill="#fff"/>
<!-- share -->
<path d="M64 963L78 951M64 963L76 973" stroke="#ddd" stroke-width="2.500"/><circle cx="63" cy="963" r="5" fill="#ddd"/><circle cx="78" cy="951" r="4.500" fill="#ddd"/><circle cx="76" cy="973" r="4.500" fill="#ddd"/>
<path d="M78 974h9l-4.500 5z" fill="#bbb"/>
<!-- doc chat -->
<path d="M102 949h14l4 5v16h-18z" fill="#5a6068"/>
<path d="M109 957h18a2 2 0 0 1 2 2v15a2 2 0 0 1-2 2h-10l-4 5v-5h-4a2 2 0 0 1-2-2v-15a2 2 0 0 1 2-2z" fill="#1f9cf0"/>
<g fill="#fff"><circle cx="113" cy="966" r="1.200"/><circle cx="118" cy="966" r="1.200"/><circle cx="123" cy="966" r="1.200"/></g>
<!-- list -->
<rect x="148" y="951" width="21" height="27" rx="1" fill="#222" stroke="#aaa"/>
<g fill="#ddd"><rect x="151" y="958" width="9" height="2"/><rect x="151" y="962" width="12" height="2"/><rect x="153" y="966" width="12" height="2"/><rect x="158" y="970" width="8" height="2"/></g>
<path d="M158 951h11l-5.500 8z" fill="#e66"/><path d="M148 978h11l-5.500-8z" fill="#4fd04f"/>
<!-- ladder -->
<g fill="#4fd04f"><rect x="186" y="951" width="13" height="5"/><rect x="192" y="958" width="8" height="5"/><rect x="188" y="965" width="12" height="5"/><rect x="191" y="972" width="9" height="5"/></g>
<g fill="#e66"><rect x="200" y="951" width="6" height="4"/><rect x="200" y="958" width="12" height="5"/><rect x="200" y="965" width="9" height="5"/><rect x="200" y="972" width="11" height="5"/></g>
<rect x="196" y="950" width="4" height="28" fill="#4fd04f" opacity=".6"/>
<!-- windows -->
<rect x="227" y="951" width="21" height="21" rx="2" fill="#111" stroke="#ddd" stroke-width="1.500"/>
<path d="M231 967c3-8 6-12 8-6s4 0 7-6" fill="none" stroke="#2fb4ee" stroke-width="1.500"/>
<rect x="236" y="959" width="21" height="21" rx="2" fill="#111" stroke="#ddd" stroke-width="1.500"/><rect x="236" y="959" width="21" height="4" fill="#ddd"/>
<path d="M240 975c3-7 5-10 8-6s3 2 6-6" fill="none" stroke="#2fb4ee" stroke-width="1.500"/>
<path d="M275 957l-5 6 5 6M282 957l-5 6 5 6" fill="none" stroke="#aaa" stroke-width="1.500"/>
<!-- scrollbar -->
<rect x="292" y="950" width="1401" height="23" fill="#0a0a0a"/>
<path d="M292 950H1693V973H292" fill="none" stroke="#555" stroke-width="1.500"/>
<rect x="292" y="950" width="25" height="23" rx="3" fill="url(#bar)"/><path d="M307 957l-5 5 5 5" fill="none" stroke="#ddd" stroke-width="2"/>
<rect x="1669" y="950" width="24" height="23" rx="3" fill="url(#bar)"/><path d="M1680 957l5 5-5 5" fill="none" stroke="#ddd" stroke-width="2"/>
<!-- candle wrench -->
<rect x="1709" y="961" width="11" height="14" fill="#f07e7e"/><rect x="1714" y="958" width="1.500" height="20" fill="#f07e7e"/>
<rect x="1722" y="953" width="12" height="21" fill="#5fdb5f"/><rect x="1727.500" y="948" width="1.500" height="30" fill="#5fdb5f"/>
<path d="M1712 974l11-10c0-5 3-7 7-6l-3 4 2 2 3-3c1 4-3 7-7 7l-9 10c-3 1-5-2-4-4z" fill="#111" stroke="#eee" stroke-width="1.500"/>
<!-- zoom axes -->
<circle cx="1759" cy="961" r="8.500" fill="url(#gl)" stroke="#ccc" stroke-width="1.500"/><path d="M1765 968l12 11" stroke="#ddd" stroke-width="3"/>
<path d="M1775 952v20M1771 956l4-5 4 5M1771 968l4 5 4-5M1752 974h14M1755 971l-4 3 4 3M1763 971l4 3-4 3" fill="none" stroke="#2fb4ee" stroke-width="2"/>
<!-- zoom out -->
<circle cx="1804" cy="960" r="8.500" fill="#111" stroke="#ddd" stroke-width="1.500"/><rect x="1799" y="958.500" width="10" height="3" fill="#2fb4ee"/><path d="M1810 967l12 11" stroke="#ddd" stroke-width="3"/>
<!-- zoom in -->
<circle cx="1847" cy="960" r="8.500" fill="#111" stroke="#ddd" stroke-width="1.500"/><path d="M1842 960h10M1847 955v10" stroke="#2fb4ee" stroke-width="3"/>
</svg>
</body></html>
